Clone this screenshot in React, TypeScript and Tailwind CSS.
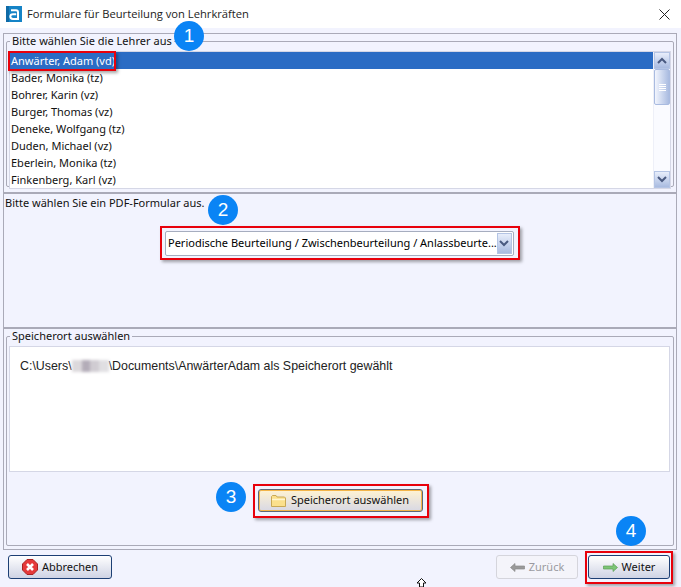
const teachers = [
  "Anwärter, Adam (vd)",
  "Bader, Monika (tz)",
  "Bohrer, Karin (vz)",
  "Burger, Thomas (vz)",
  "Deneke, Wolfgang (tz)",
  "Duden, Michael (vz)",
  "Eberlein, Monika (tz)",
  "Finkenberg, Karl (vz)",
];

const Badge = ({ n, className }: { n: number; className: string }) => (
  <div
    className={`absolute flex h-[30px] w-[30px] items-center justify-center rounded-full bg-[#0a84f5] font-['Liberation_Sans',sans-serif] text-[19px] text-white ${className}`}
  >
    {n}
  </div>
);

const Logo = () => (
  <svg width="16" height="16" viewBox="0 0 16 16">
    <rect width="16" height="16" fill="#1583c6" />
    <rect width="3" height="16" fill="#0f6aa6" />
    <path
      d="M5 4.2H10Q12 4.2 12 6.2V13H7Q4.3 13 4.3 10.6Q4.3 8.2 7 8.2H10.2"
      fill="none"
      stroke="#fff"
      strokeWidth="2"
    />
  </svg>
);

const Chevron = ({ up }: { up?: boolean }) => (
  <svg width="10" height="7" viewBox="0 0 10 7">
    <path d={up ? "M1 6 L5 2 L9 6" : "M1 1 L5 5 L9 1"} fill="none" stroke="#4a5a80" strokeWidth="2" />
  </svg>
);

const Folder = () => (
  <svg width="15" height="12" viewBox="0 0 15 12">
    <path d="M.5 11.5V1.5L1.5.5H5L6 2H13.5L14.5 3V11.5Z" fill="#fbe08c" stroke="#c9a955" />
    <path d="M1 4.5H14" stroke="#fff6cf" strokeWidth="1.5" />
  </svg>
);

const CloseIcon = () => (
  <svg width="16" height="16" viewBox="0 0 16 16">
    <path d="M5 .5H11L15.5 5V11L11 15.5H5L.5 11V5Z" fill="#e5393a" stroke="#a82222" />
    <path d="M5 5L11 11M11 5L5 11" stroke="#fff" strokeWidth="2.6" />
  </svg>
);

const Arrow = ({ left, fill, stroke }: { left?: boolean; fill: string; stroke: string }) => (
  <svg width="15" height="9" viewBox="0 0 15 9">
    <path
      d={left ? "M.5 4.5L5 .5V3H14.5V6H5V8.5Z" : "M14.5 4.5L10 .5V3H.5V6H10V8.5Z"}
      fill={fill}
      stroke={stroke}
      strokeWidth="0.7"
    />
  </svg>
);

const App = () => {
  return (
    <div className="relative flex h-[587px] w-[681px] flex-col overflow-hidden bg-[#f2f3fe] font-['Noto_Sans',sans-serif] text-[11px] text-[#111]">
      {/* title bar */}
      <div className="flex h-[28px] items-center bg-white pl-[6px] pr-[11px]">
        <Logo />
        <span className="ml-[5px] font-['Open_Sans',sans-serif] text-[11.2px] text-[#222]">
          Formulare für Beurteilung von Lehrkräften
        </span>
        <svg className="ml-auto" width="11" height="11" viewBox="0 0 11 11">
          <path d="M.5 .5L10.5 10.5M10.5 .5L.5 10.5" stroke="#222" strokeWidth="1" />
        </svg>
      </div>

      {/* main panel */}
      <div className="ml-[3px] mt-[5px] flex h-[517px] w-[674px] flex-col border border-[#aaaab8]">
        {/* teachers */}
        <div className="h-[160px] border-b-2 border-[#aaaab8] px-[2px]">
          <fieldset className="h-[153px] rounded-[2px] border border-[#aaaab8] px-[2px]">
            <legend className="ml-[1px] px-[2px] leading-[14px] tracking-[0.03px]">Bitte wählen Sie die Lehrer aus</legend>
            <div className="mt-[3px] flex h-[138px] border border-[#d5d7e6] bg-white">
              <ul className="flex-1">
                {teachers.map((t, i) => (
                  <li
                    key={t}
                    className={`h-[17px] pl-[1px] leading-[17px] ${i === 0 ? "bg-[#2b6cc4] text-white" : ""}`}
                  >
                    {t}
                  </li>
                ))}
              </ul>
              <div className="flex w-[17px] flex-col border-l border-[#eef0f8] bg-[#fafbff]">
                <div className="flex h-[17px] items-center justify-center border border-[#b4c4e4] bg-gradient-to-b from-[#e8eefb] to-[#a9bbe0]">
                  <Chevron up />
                </div>
                <div className="flex h-[36px] flex-col items-center justify-center gap-[1px] rounded-[2px] border border-[#a9bbe0] bg-gradient-to-r from-[#f2f5fd] to-[#a9bbe0]">
                  <div className="h-px w-[7px] bg-white" />
                  <div className="h-px w-[7px] bg-white" />
                  <div className="h-px w-[7px] bg-white" />
                  <div className="h-px w-[7px] bg-white" />
                </div>
                <div className="flex-1" />
                <div className="flex h-[17px] items-center justify-center border border-[#b4c4e4] bg-gradient-to-b from-[#e8eefb] to-[#a9bbe0]">
                  <Chevron />
                </div>
              </div>
            </div>
          </fieldset>
        </div>

        {/* pdf form */}
        <div className="h-[135px] border-b-2 border-[#aaaab8] pt-[2px]">
          <div className="pl-[1px] leading-[14px]">Bitte wählen Sie ein PDF-Formular aus.</div>
          <div className="mt-[21px] flex justify-center pr-[1px]">
            <div className="flex h-[25px] w-[349px] items-center justify-between rounded-[2px] border border-[#a6adbf] bg-white pl-[2px] pr-[1px] text-black">
              <span className="whitespace-nowrap">Periodische Beurteilung / Zwischenbeurteilung / Anlassbeurte...</span>
              <div className="flex h-[21px] w-[16px] items-center justify-center border border-[#b4c4e4] bg-gradient-to-b from-[#e8eefb] to-[#a9bbe0]">
                <Chevron />
              </div>
            </div>
          </div>
        </div>

        {/* save location */}
        <div className="flex-1 px-[2px]">
          <fieldset className="h-[217px] rounded-[2px] border border-[#aaaab8] px-[2px]">
            <legend className="ml-[1px] px-[2px] leading-[14px]">Speicherort auswählen</legend>
            <div className="mt-[3px] flex h-[126px] w-[661px] items-start border border-[#d5d7e6] bg-white pl-[10px] pt-[12px] font-['Liberation_Sans',sans-serif] text-[12.4px] leading-[14px] text-[#222]">
              <span>C:\Users\</span>
              <span className="mt-[1px] flex h-[12px] w-[37px] blur-[1.5px]">
                <span className="w-[10px] bg-[#dcd9dc]" />
                <span className="w-[8px] bg-[#b3acb8]" />
                <span className="w-[9px] bg-[#d0ccd2]" />
                <span className="w-[10px] bg-[#e0dfe2]" />
              </span>
              <span>\Documents\AnwärterAdam als Speicherort gewählt</span>
            </div>
            <div className="mt-[17px] flex justify-center">
              <button className="flex h-[23px] w-[165px] items-center justify-center gap-[5px] rounded-[3px] border border-[#5c6878] bg-gradient-to-b from-[#fff3d2] to-[#d8d8e4] shadow-[inset_0_0_0_1px_#f3b549]">
                <Folder />
                Speicherort auswählen
              </button>
            </div>
          </fieldset>
        </div>
      </div>

      {/* footer */}
      <div className="mt-[5px] flex items-start pl-[8px] pr-[11px]">
        <button className="flex h-[24px] w-[104px] items-center justify-center gap-[4px] rounded-[3px] border border-[#1d3f74] bg-gradient-to-b from-white to-[#cfd3e4]">
          <CloseIcon />
          Abbrechen
        </button>
        <button className="ml-auto flex h-[24px] w-[82px] items-center justify-center gap-[4px] rounded-[3px] border border-[#d5d5dc] bg-[#f4f4fa] text-[#9a9aa0]">
          <Arrow left fill="#9a9a9a" stroke="#8a8a8a" />
          Zurück
        </button>
        <button className="ml-[10px] flex h-[24px] w-[82px] items-center justify-center gap-[4px] rounded-[3px] border border-[#1d3f74] bg-gradient-to-b from-white to-[#cfd3e4]">
          <Arrow fill="#7cc576" stroke="#5b9e56" />
          Weiter
        </button>
      </div>

      {/* annotations over the screenshot */}
      <div className="absolute left-[8px] top-[51px] h-[20px] w-[108px] border-2 border-[#e8000b] shadow-[2px_2px_3px_rgba(0,0,0,0.35)]" />
      <div className="absolute left-[160px] top-[226px] h-[34px] w-[360px] border-2 border-[#e8000b] shadow-[2px_2px_3px_rgba(0,0,0,0.35)]" />
      <div className="absolute left-[253px] top-[484px] h-[34px] w-[176px] border-2 border-[#e8000b] shadow-[2px_2px_3px_rgba(0,0,0,0.35)]" />
      <div className="absolute left-[585px] top-[551px] h-[33px] w-[88px] border-2 border-[#e8000b] shadow-[2px_2px_3px_rgba(0,0,0,0.35)]" />
      <Badge n={1} className="left-[174px] top-[21px]" />
      <Badge n={2} className="left-[208px] top-[195px]" />
      <Badge n={3} className="left-[216px] top-[482px]" />
      <Badge n={4} className="left-[616px] top-[516px]" />
      <svg className="absolute left-[416px] top-[578px]" width="11" height="9" viewBox="0 0 11 9">
        <path d="M5.5 .5L10 5H7.5V9H3.5V5H1Z" fill="#fff" stroke="#111" strokeWidth="1" />
      </svg>
    </div>
  );
};

export default App;
